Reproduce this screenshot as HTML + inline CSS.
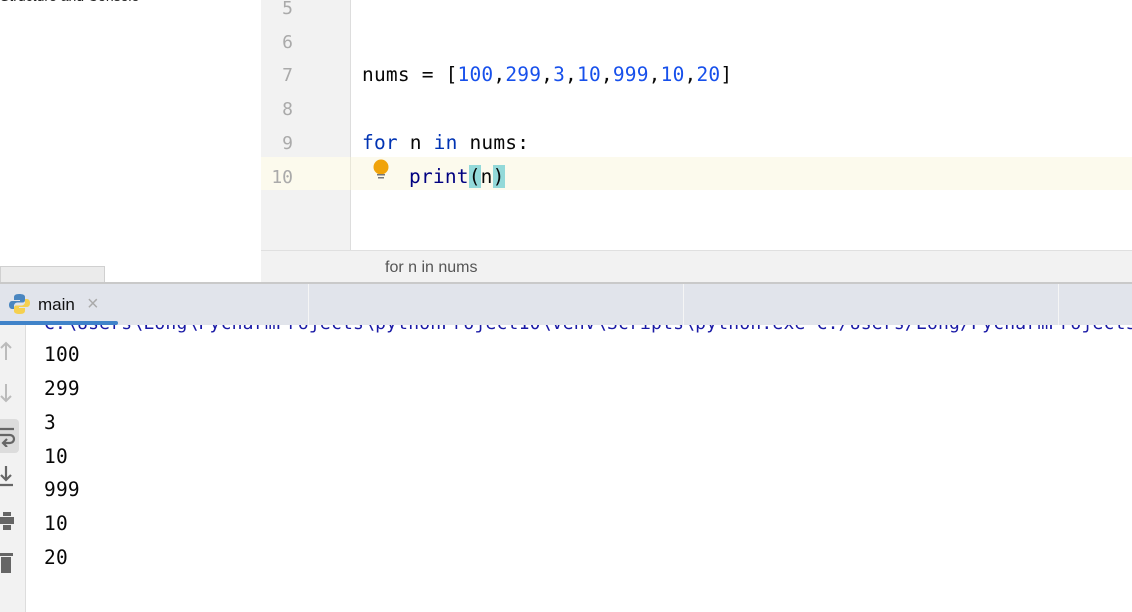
<!DOCTYPE html><html><head><style>
body{margin:0;width:1132px;height:612px;position:relative;overflow:hidden;background:#fff;font-family:"Liberation Sans",sans-serif}
.a{position:absolute}
.mono{font-family:"DejaVu Sans Mono","Liberation Mono",monospace;font-size:19.5px;letter-spacing:0.2px}
.ln{position:absolute;left:261px;width:32px;text-align:right;color:#aaa;font-family:"DejaVu Sans Mono",monospace;font-size:18px}
.code{position:absolute;left:362px;color:#080808;white-space:pre}
.num{color:#1750eb}.kw{color:#0033b3}
.out{position:absolute;left:44px;color:#080808}
</style></head><body>
<div class="a" style="left:0;top:-12px;font-size:14px;color:#222">Structure and Console</div>
<div class="a" style="left:261px;top:0;width:90px;height:250px;background:#f2f2f2"></div>
<div class="a" style="left:350px;top:0;width:1px;height:250px;background:#ddd"></div>
<div class="a" style="left:261px;top:157px;width:871px;height:33px;background:#fcfaed"></div>
<div class="a" style="left:350px;top:157px;width:1px;height:33px;background:#e8e6d8"></div>
<div class="ln" style="top:-2px">5</div>
<div class="ln" style="top:32px">6</div>
<div class="ln" style="top:65px">7</div>
<div class="ln" style="top:99px">8</div>
<div class="ln" style="top:133px">9</div>
<div class="ln" style="top:167px">10</div>
<div class="code mono" style="top:63px">nums = [<span class="num">100</span>,<span class="num">299</span>,<span class="num">3</span>,<span class="num">10</span>,<span class="num">999</span>,<span class="num">10</span>,<span class="num">20</span>]</div>
<div class="code mono" style="top:131px"><span class="kw">for</span> n <span class="kw">in</span> nums:</div>
<div class="code mono" style="top:165px;left:409px"><span style="color:#000080">print</span><span style="background:#93d9d9">(</span>n<span style="background:#93d9d9">)</span></div>
<svg class="a" style="left:372px;top:159px" width="18" height="24"><circle cx="9" cy="8" r="7.5" fill="#f0a30a"/><rect x="5" y="15" width="8" height="1.5" fill="#777"/><rect x="6" y="18" width="6" height="1.5" fill="#777"/></svg>
<div class="a" style="left:261px;top:250px;width:871px;height:33px;background:#f2f2f2;border-top:1px solid #e0e0e0"></div>
<div class="a" style="left:385px;top:259px;font-size:16px;color:#555">for n in nums</div>
<div class="a" style="left:0;top:266px;width:103px;height:17px;background:#ebebeb;border:1px solid #d0d0d0;border-bottom:none"></div>
<div class="a" style="left:0;top:282px;width:1132px;height:2px;background:#c9c9c9"></div>
<div class="a mono" style="left:44px;top:313px;color:#1a1aa6;white-space:pre;font-size:18px">C:\Users\Long\PycharmProjects\pythonProject10\venv\Scripts\python.exe C:/Users/Long/PycharmProjects/</div>
<div class="a" style="left:0;top:284px;width:1132px;height:41px;background:#e1e4eb"></div>
<div class="a" style="left:308px;top:284px;width:1px;height:41px;background:#f5f5f5"></div>
<div class="a" style="left:683px;top:284px;width:1px;height:41px;background:#f5f5f5"></div>
<div class="a" style="left:1058px;top:284px;width:1px;height:41px;background:#f5f5f5"></div>
<div class="a" style="left:0;top:321px;width:118px;height:4px;background:#4083c9;border-radius:0 2px 2px 0"></div>
<svg class="a" style="left:9px;top:293px" width="22" height="22"><path d="M10 1c-4 0-5 1.5-5 3.5V7h6v1H3C1 8 0 10 0 12s1 4 3 4h2v-3c0-2 1.5-3.5 3.5-3.5h5c1.5 0 2.5-1 2.5-2.5V4c0-2-2-3-6-3z" fill="#4a86c0"/><path d="M11 21c4 0 5-1.5 5-3.5V15h-6v-1h8c2 0 3-2 3-4s-1-4-3-4h-2v3c0 2-1.5 3.5-3.5 3.5h-5C6 12.5 5 13.5 5 15v3c0 2 2 3 6 3z" fill="#f5d04f"/></svg>
<div class="a" style="left:38px;top:295px;font-size:17px;color:#111">main</div>
<div class="a" style="left:87px;top:293px;font-size:20px;color:#aaa">×</div>
<div class="a" style="left:0;top:325px;width:25px;height:287px;background:#f2f2f2;border-right:1px solid #ddd"></div>
<svg class="a" style="left:0;top:340px" width="14" height="22"><path d="M6 20V3M1 8l5-5 5 5" stroke="#bbb" stroke-width="2" fill="none"/></svg>
<svg class="a" style="left:0;top:382px" width="14" height="22"><path d="M6 2v17M1 14l5 5 5-5" stroke="#bbb" stroke-width="2" fill="none"/></svg>
<div class="a" style="left:-4px;top:419px;width:23px;height:34px;background:#dcdcdc;border-radius:4px"></div>
<svg class="a" style="left:0;top:427px" width="16" height="20"><path d="M0 2h14M0 8h10a4 4 0 0 1 0 8H4M7 12l-4 4 4 4" stroke="#666" stroke-width="2.2" fill="none"/></svg>
<svg class="a" style="left:0;top:465px" width="16" height="24"><path d="M6 1v14M1 10l5 5 5-5M0 20h13" stroke="#666" stroke-width="2.2" fill="none"/></svg>
<svg class="a" style="left:0;top:512px" width="16" height="20"><rect x="3" y="0" width="8" height="4" fill="#666"/><rect x="0" y="5" width="14" height="7" fill="#666"/><rect x="3" y="13" width="8" height="5" fill="#666"/></svg>
<svg class="a" style="left:0;top:551px" width="16" height="24"><rect x="0" y="2" width="13" height="3" fill="#666"/><rect x="1" y="6" width="10" height="16" fill="#666"/></svg>
<div class="out mono" style="top:343px">100</div>
<div class="out mono" style="top:377px">299</div>
<div class="out mono" style="top:411px">3</div>
<div class="out mono" style="top:445px">10</div>
<div class="out mono" style="top:478px">999</div>
<div class="out mono" style="top:512px">10</div>
<div class="out mono" style="top:546px">20</div>
</body></html>
